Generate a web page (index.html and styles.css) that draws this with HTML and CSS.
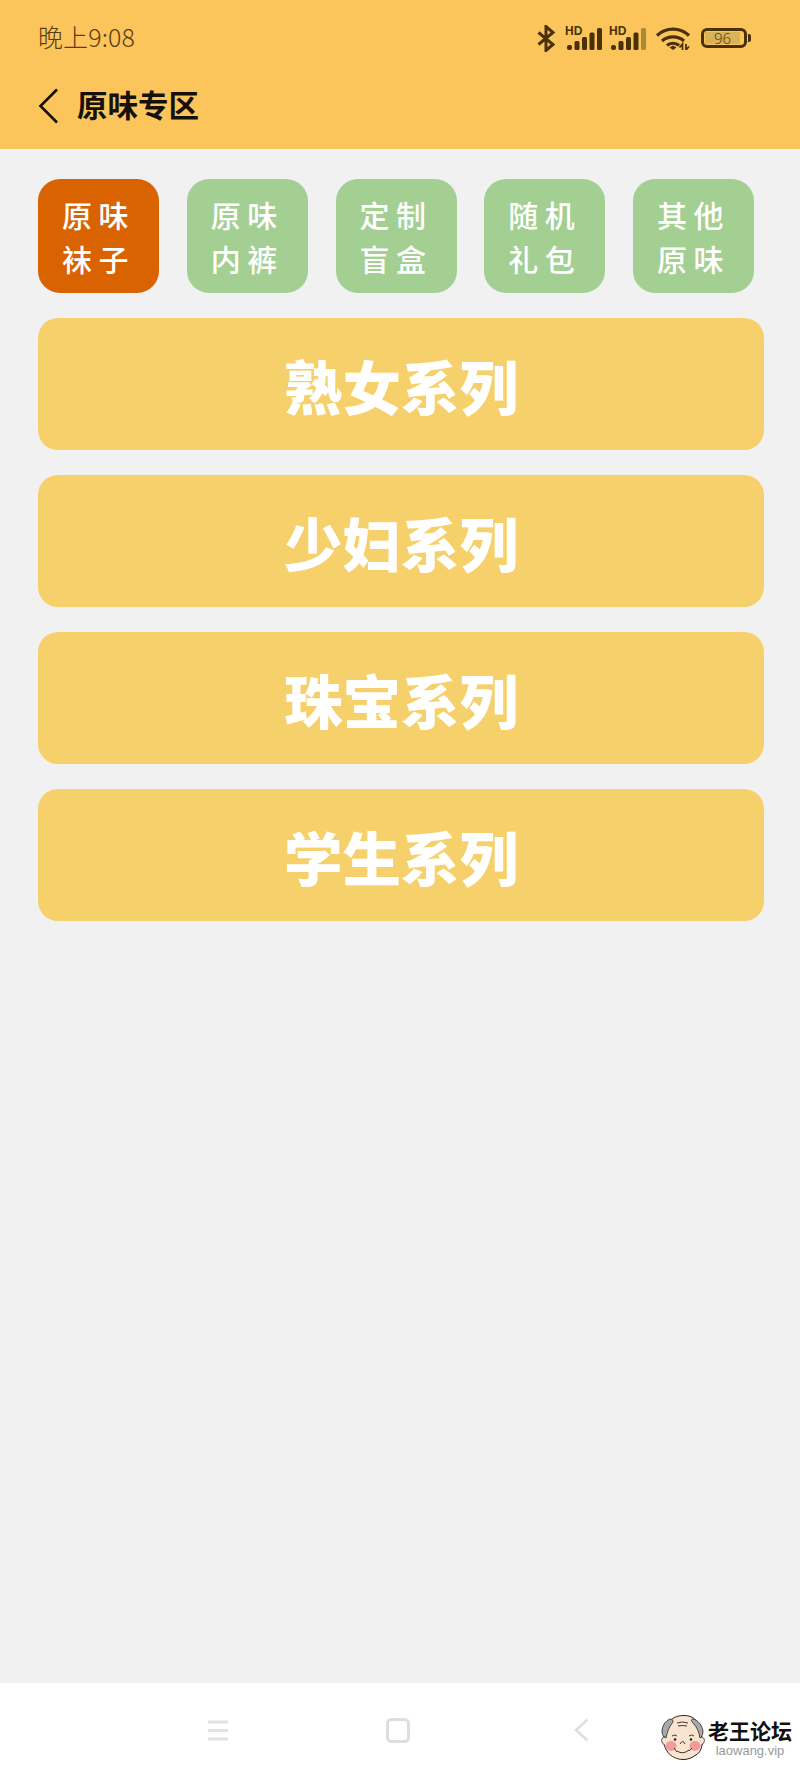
FILE: index.html
```html
<!DOCTYPE html>
<html lang="zh">
<head>
<meta charset="utf-8">
<title>原味专区</title>
<link rel="stylesheet" href="styles.css">
</head>
<body>
<div class="app">
  <header class="top">
    <div class="status">
      <span class="time">晚上9:08</span>
      <div class="status-icons">
        <svg class="ic-bt" viewBox="0 0 18 27"><path d="M1.500 7.500L16 19.500 9 25.500V1.500L16 7.500 1.500 19.500" fill="none" stroke="#4a3108" stroke-width="3"/></svg>
        <div class="signal">
          <span class="hd">HD</span>
          <svg viewBox="0 0 35 22"><rect x="0" y="17" width="5" height="5" rx="2"/><rect x="7.500" y="13" width="5" height="9" rx="1.500"/><rect x="15" y="9" width="5" height="13" rx="1.500"/><rect x="22.500" y="4.500" width="5" height="17.500" rx="1.500"/><rect x="30" y="0" width="5" height="22" rx="1.500"/></svg>
        </div>
        <div class="signal">
          <span class="hd">HD</span>
          <svg viewBox="0 0 35 22"><rect x="0" y="17" width="5" height="5" rx="2"/><rect x="7.500" y="13" width="5" height="9" rx="1.500"/><rect x="15" y="9" width="5" height="13" rx="1.500"/><rect x="22.500" y="4.500" width="5" height="17.500" rx="1.500"/><rect class="dim" x="30" y="0" width="5" height="22" rx="1.500"/></svg>
        </div>
        <svg class="ic-wifi" viewBox="0 0 34 23"><path d="M1 8.500C10 0 24 0 33 8.500M6 14C12 8.500 22 8.500 28 14M11 18.500C14 15.500 20 15.500 23 18.500" fill="none" stroke="#4a3108" stroke-width="3.200"/><path d="M13.500 20.500l3.500-2 3.500 2-3.500 2.500z" fill="#4a3108"/><path d="M26.500 23v-6l-3 3.500M30 17v6l3-3.500" fill="none" stroke="#4a3108" stroke-width="1.800"/></svg>
        <div class="battery">
          <div class="battery-body"><span class="battery-fill">96</span></div>
          <span class="battery-nub"></span>
        </div>
      </div>
    </div>
    <div class="titlebar">
      <svg class="back" viewBox="0 0 21 36"><path d="M19 1.500L2.500 18 19 34.500" fill="none" stroke="#15100a" stroke-width="2.600"/></svg>
      <h1 class="title">原味专区</h1>
    </div>
  </header>

  <main class="content">
    <nav class="tabs">
      <a class="tab active">原味<br>袜子</a>
      <a class="tab">原味<br>内裤</a>
      <a class="tab">定制<br>盲盒</a>
      <a class="tab">随机<br>礼包</a>
      <a class="tab">其他<br>原味</a>
    </nav>
    <section class="cards">
      <a class="card">熟女系列</a>
      <a class="card">少妇系列</a>
      <a class="card">珠宝系列</a>
      <a class="card">学生系列</a>
    </section>
  </main>

  <footer class="navbar">
    <svg class="nav-menu" viewBox="0 0 22 21"><path d="M1 2h20M1 10.500h20M1 19h20" fill="none" stroke="#e2e2e2" stroke-width="3"/></svg>
    <svg class="nav-home" viewBox="0 0 24 25"><rect x="1.500" y="1.500" width="21" height="22" rx="4" fill="none" stroke="#dedede" stroke-width="3"/></svg>
    <svg class="nav-back" viewBox="0 0 15 24"><path d="M13.500 1.500L2 12l11.500 10.500" fill="none" stroke="#e0e0e0" stroke-width="2.800"/></svg>
  </footer>

  <div class="watermark">
    <svg class="face" viewBox="0 0 46 46">
      <path d="M8 9C12 2 18 .5 24 .5c7 0 12 3 14 9 3 7 5 14 4 21-1 5-3 8-7 10-4 3-8 4-12 4-6 0-12-3-15-7-3-4-5-9-4-15 0-5 2-9 4-13z" fill="#f8e4cf" stroke="#2b2320" stroke-width="1"/>
      <path d="M10 4C5 6 2 11 2 17c0 3 2 5 4 6 1-6 3-11 7-16 0-2-1-3-3-3zM33 4c5 1 9 6 10 12 0 3-1 6-3 7-1-6-3-11-7-15-2-2-2-4 0-4z" fill="#a9a9ab" stroke="#2b2320" stroke-width=".8"/>
      <path d="M5 22c-3 0-4 3-3 5s2 3 3 3M41 22c3 0 4 3 3 5s-2 3-3 3" fill="#f8e4cf" stroke="#2b2320" stroke-width=".8"/>
      <ellipse cx="11" cy="31" rx="5.500" ry="5" fill="#f29b9b"/><ellipse cx="35" cy="31" rx="5.500" ry="5" fill="#f29b9b"/>
      <path d="M17 8q5-2 11 0M18 11q4-1 9 0M12 21q3-2 5 0M29 21q3-2 5 0M20 29q3-5 5 0M17 36q6 4 12-1M14 33l3 4M32 33l-3 3" fill="none" stroke="#2b2320" stroke-width=".9"/>
      <circle cx="15" cy="24.500" r="1.300" fill="#2b2320"/><circle cx="31" cy="24.500" r="1.300" fill="#2b2320"/>
    </svg>
    <div class="wm-text">
      <span class="wm-name">老王论坛</span>
      <span class="wm-url">laowang.vip</span>
    </div>
  </div>
</div>
</body>
</html>
```

FILE: styles.css
```css
* { box-sizing: border-box; }
html, body { margin: 0; padding: 0; }
body { font-family: "Noto Sans CJK SC", "Noto Sans", sans-serif; background: #f1f1f2; }
.app { position: relative; width: 800px; height: 1778px; display: flex; flex-direction: column; overflow: hidden; }

.top { height: 149px; background: #fcc55c; padding: 0 49px 0 38px; flex: none; }
.status { height: 78px; display: flex; justify-content: space-between; align-items: flex-start; padding-top: 18px; }
.time { font-size: 25px; line-height: 36px; font-weight: 300; color: #5a3d10; letter-spacing: .1px; }
.status-icons { display: flex; align-items: flex-start; }
.ic-bt { width: 18px; height: 27px; margin-top: 7px; }
.signal { position: relative; width: 37px; height: 23px; margin: 9px 0 0 10px; }
.signal svg { position: absolute; left: 2px; bottom: 0; width: 35px; height: 22px; fill: #4a3108; }
.signal .dim { fill: #a98a3a; }
.signal + .signal { margin-left: 7px; }
.hd { position: absolute; left: 0; top: 0; font: 700 12px/9px "Liberation Sans", sans-serif; color: #4a3108; }
.ic-wifi { width: 34px; height: 23px; margin: 9px 0 0 10px; }
.battery { display: flex; align-items: center; margin: 10px 0 0 11px; }
.battery-body { width: 46px; height: 20px; border: 3px solid #4a3108; border-radius: 6px; padding: 1px; }
.battery-fill { display: block; width: 35px; height: 12px; background: #d9b25a; text-align: center; font: 300 15px/12px "Noto Sans", sans-serif; color: #5a3d10; }
.battery-nub { width: 3px; height: 8px; margin-left: 1px; background: #4a3108; border-radius: 0 2px 2px 0; }

.titlebar { display: flex; align-items: center; height: 44px; margin-top: 6px; }
.back { width: 21px; height: 36px; flex: none; }
.title { margin: 0 0 4px 18px; font-size: 30.500px; line-height: 40px; font-weight: 700; color: #15100a; }

.content { flex: 1; padding: 30px 36px 0 38px; }
.tabs { display: flex; justify-content: space-between; padding-right: 10px; }
.tab { width: 121px; height: 114px; border-radius: 22px; background: #a4cf92; color: #fff; display: block; text-align: center; font-size: 30px; line-height: 44px; font-weight: 500; letter-spacing: 6.500px; padding-top: 13px; }
.tab.active { background: #d96201; }
.cards { display: flex; flex-direction: column; gap: 25px; margin-top: 25px; }
.card { height: 132px; border-radius: 20px; background: #f6d06b; color: #fff; display: flex; align-items: center; justify-content: center; font-size: 58.500px; font-weight: 900; line-height: 1; padding-top: 2px; }

.navbar { flex: none; height: 95px; background: #fff; position: relative; display: flex; align-items: flex-start; padding: 35px 0 0 207px; }
.navbar svg { filter: blur(.7px); }
.nav-menu { width: 22px; height: 21px; margin-top: 2px; }
.nav-home { width: 24px; height: 25px; margin-left: 157px; }
.nav-back { width: 15px; height: 24px; margin-left: 164px; }

.watermark { position: absolute; left: 660px; top: 1715px; display: flex; }
.face { width: 46px; height: 46px; flex: none; }
.wm-text { display: flex; flex-direction: column; align-items: center; margin-left: 2px; padding-top: 3px; }
.wm-name { font-size: 21px; line-height: 24px; font-weight: 700; color: #111; white-space: nowrap; }
.wm-url { font: 400 13px/14px "Liberation Sans", sans-serif; color: #999; white-space: nowrap; margin-top: 2px; }
```
